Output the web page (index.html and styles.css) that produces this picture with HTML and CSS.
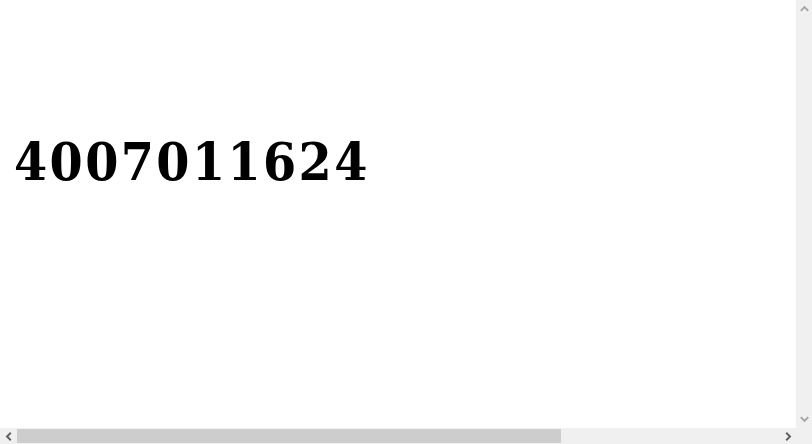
FILE: index.html
```html
<!DOCTYPE html>
<html lang="en">
<head>
<meta charset="utf-8">
<title>4007011624</title>
<link rel="stylesheet" href="styles.css">
</head>
<body>
<div class="page">
  <div class="number">4007011624</div>
</div>
<div class="vscroll">
  <svg class="arrow up" width="9" height="7" viewBox="0 0 9 7"><path d="M0.8 5.8 L4.5 2 L8.2 5.8" fill="none" stroke="#a3a3a3" stroke-width="1.8"/></svg>
  <svg class="arrow down" width="9" height="7" viewBox="0 0 9 7"><path d="M0.8 1.2 L4.5 5 L8.2 1.2" fill="none" stroke="#a3a3a3" stroke-width="1.8"/></svg>
</div>
<div class="hscroll">
  <svg class="harrow" width="7" height="9" viewBox="0 0 7 9"><path d="M5.8 0.8 L2 4.5 L5.8 8.2" fill="none" stroke="#606060" stroke-width="1.9"/></svg>
  <div class="htrack"><div class="hthumb"></div></div>
  <svg class="harrow" width="7" height="9" viewBox="0 0 7 9"><path d="M1.2 0.8 L5 4.5 L1.2 8.2" fill="none" stroke="#606060" stroke-width="1.9"/></svg>
</div>
<div class="corner"></div>
</body>
</html>
```
FILE: styles.css
```css
html, body {
  overflow: hidden;
}
body {
  margin: 8px;
  background: #ffffff;
}
.page {
  padding: 122px 0 0 6px;
}
.number {
  font-family: "DejaVu Serif Condensed", "DejaVu Serif", serif;
  font-stretch: condensed;
  font-weight: bold;
  font-size: 53px;
  letter-spacing: 2.4px;
  line-height: normal;
  color: #000000;
}
.vscroll {
  position: fixed;
  top: 0;
  right: 0;
  width: 16px;
  height: 428px;
  background: #f0f0f0;
  display: flex;
  flex-direction: column;
  justify-content: space-between;
  align-items: center;
  padding: 5px 0;
  box-sizing: border-box;
}
.hscroll {
  position: fixed;
  left: 0;
  bottom: 0;
  width: 796px;
  height: 16px;
  background: #f0f0f0;
  display: flex;
  align-items: center;
}
.harrow {
  flex: 0 0 auto;
  margin: 0 4px 0 5px;
}
.htrack {
  flex: 1;
  height: 14px;
  display: flex;
}
.hthumb {
  width: 544px;
  height: 14px;
  margin-left: 1px;
  background: #cdcdcd;
}
.corner {
  position: fixed;
  right: 0;
  bottom: 0;
  width: 16px;
  height: 16px;
  background: #f0f0f0;
}
```
